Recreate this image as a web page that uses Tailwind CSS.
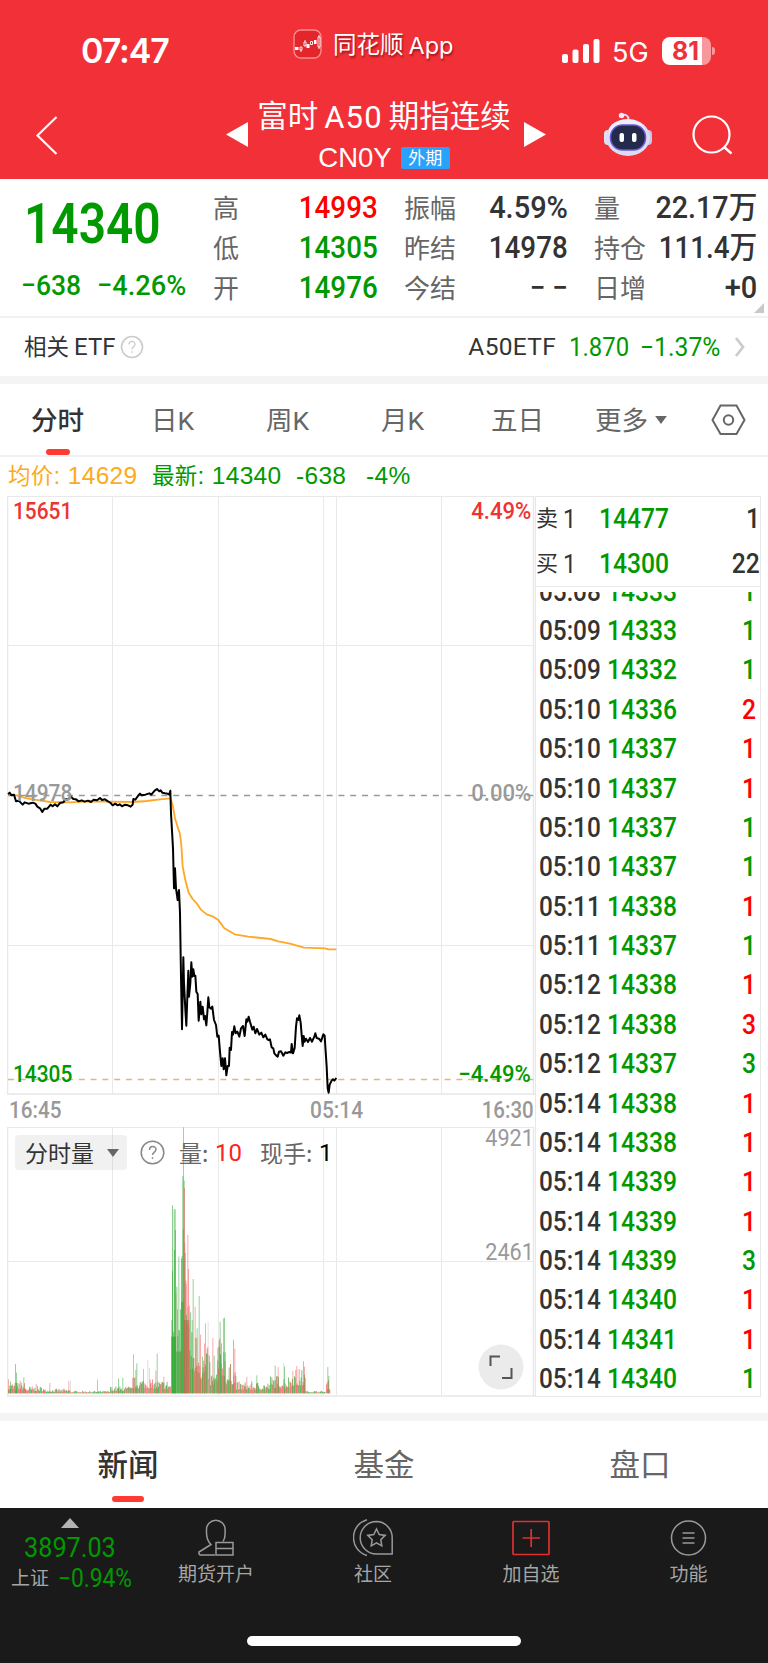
<!DOCTYPE html>
<html lang="zh-CN">
<head>
  <meta charset="UTF-8">
  <meta name="viewport" content="width=device-width, initial-scale=1.0">
  <title>富时A50期指连续</title>
  <script src="https://cdn.jsdelivr.net/npm/@tailwindcss/browser@4"></script>
</head>
<body class="w-[768px] h-[1663px] overflow-hidden bg-white text-[#333] font-['Liberation_Sans','Noto_Sans_CJK_SC',sans-serif] leading-none whitespace-nowrap flex flex-col">

  <!-- 顶部 -->
  <header class="h-[179px] shrink-0 bg-[#f23037] text-white">
    <div class="h-[92px] flex">
      <div class="w-[292px] pl-[81px] pt-[34px] text-[34px] font-semibold font-['Inter',sans-serif] tracking-[-1.1px]">07:47</div>
      <div class="w-[268px] pt-[29px] flex items-start gap-[10px]">
        <svg class="w-[31px] h-[31px]" viewBox="0 0 31 31" fill="none">
          <rect x="2" y="1" width="27" height="28" rx="7" fill="#e2262b" stroke="#fa8c8e" stroke-width="1.4"/>
          <path d="M3 18h3.500v3H3zM14.500 15h3v4h-3zM22 11h2.500v4H22z" fill="#fff"/>
          <path d="M8 18h2v3H8zM9 21v2M12 13h2v4h-2zM13 11v2M18.500 12.500h2v3h-2zM26 8h2v10h-2zM27 6v2M27 18v2" stroke="#fff" stroke-width=".9"/>
        </svg>
        <div class="pt-[5px] flex text-[23.500px] [text-shadow:1px_2px_2px_rgba(90,0,0,.55)]">同花顺<span class="ml-[5px] text-[23.500px] font-['Inter',sans-serif]">App</span></div>
      </div>
      <div class="flex items-start pt-[36px]">
        <svg class="w-[40px] h-[28px]" viewBox="0 0 40 28" fill="#fff">
          <rect x="2" y="18" width="6" height="9" rx="2"/><rect x="12.500" y="13.500" width="6" height="13.500" rx="2"/><rect x="23" y="8" width="6" height="19" rx="2"/><rect x="33.500" y="3" width="6" height="24" rx="2"/>
        </svg>
        <div class="pl-[12px] pt-[3px] w-[62px] text-[27px] font-['Inter',sans-serif]">5G</div>
        <div class="mt-[1px] w-[49px] h-[28px] rounded-[8px] bg-linear-to-r from-white from-[82%] to-white/50 to-[82%] flex items-center pl-[10px] text-[25px] font-bold font-['Inter',sans-serif] text-[#f23037]">81</div>
        <div class="mt-[11px] ml-[1px] w-[3px] h-[8px] rounded-r-full bg-white/50"></div>
      </div>
    </div>
    <div class="h-[87px] flex">
      <svg class="w-[225px] h-[87px]" viewBox="0 92 225 87" fill="none" stroke="#fff" stroke-width="2.200"><path d="M56.500 117 37.500 135.500 56.500 154"/></svg>
      <svg class="w-[24px] h-[87px]" viewBox="225 92 24 87" fill="#fff"><path d="M226 134.500 248 122v25z"/></svg>
      <div class="w-[270px] mr-[4px] flex flex-col items-center">
        <div class="mt-[9px] h-[32px] flex items-center gap-[6px] text-[30.500px] font-['Roboto','Noto_Sans_CJK_SC',sans-serif]"><span>富时</span><span class="tracking-[1.200px] text-[31px]">A50</span><span>期指连续</span></div>
        <div class="mt-[11px] h-[28px] flex items-center gap-[9px]">
          <span class="text-[27.500px]">CN0Y</span>
          <span class="w-[49px] h-[22px] rounded-[2px] bg-[#2aa2fc] text-[17px] flex items-center justify-center">外期</span>
        </div>
      </div>
      <svg class="w-[245px] h-[87px]" viewBox="523 92 245 87" fill="none">
        <path d="M524 122v25l22-12.500z" fill="#fff"/>
        <!-- 机器人 -->
        <path d="M622 115.500c3-2 6.500 0 6.500 4" stroke="#dcd8f5" stroke-width="2"/>
        <circle cx="621.500" cy="115.500" r="2.700" fill="#eef"/>
        <rect x="604" y="130" width="8" height="15" rx="4" fill="#dfe0f4"/><rect x="644" y="130" width="8" height="15" rx="4" fill="#c9c6e8"/>
        <ellipse cx="628" cy="137.500" rx="22" ry="18.500" fill="#dedcf3"/>
        <ellipse cx="627" cy="131" rx="18" ry="11.500" fill="#eeeefb"/>
        <rect x="610.500" y="125" width="35" height="25" rx="12" fill="#242a49" stroke="#6a55d8" stroke-width="1.500"/>
        <rect x="619.500" y="133" width="4.500" height="9" rx="2" fill="#fff"/><rect x="632" y="133" width="4.500" height="9" rx="2" fill="#fff"/>
        <circle cx="711.500" cy="134.500" r="18" stroke="#fff" stroke-width="2.200"/><path d="m724 147 7.500 6.500" stroke="#fff" stroke-width="2.400"/>
      </svg>
    </div>
  </header>

  <!-- 行情 -->
  <section class="h-[139px] shrink-0 pt-[9px] border-b-2 border-[#f1f1f1] flex relative">
    <div class="w-[213px] text-[#090] font-['Roboto',sans-serif]">
      <div class="pl-[24px] h-[76px] pt-[9px] text-[55px] font-semibold"><span class="inline-block origin-left scale-x-[.87]">14340</span></div>
      <div class="pl-[21px] flex text-[28.500px] font-medium h-[30px] mt-[8px]"><span class="w-[76px]"><span class="inline-block origin-left scale-x-[.93]">−638</span></span><span class="inline-block origin-left scale-x-[.955]">−4.26%</span></div>
    </div>
    <div id="quote" class="w-[544px] h-[120px] grid grid-cols-[165px_26px_164px_26px_163px] grid-rows-3 text-[26px] text-[#666]"></div>
    <svg class="absolute right-[4px] bottom-[3px] w-[10px] h-[10px]" viewBox="0 0 10 10"><path d="M10 0v10H0z" fill="#c8c8c8"/></svg>
  </section>

  <!-- 相关ETF -->
  <section class="h-[66px] shrink-0 border-b-8 border-[#f4f4f4] flex items-center pl-[24px] pr-[22px]">
    <span class="pt-[2px] text-[22.500px]">相关</span>
    <span class="ml-[5px] text-[24px] font-['Roboto',sans-serif]">ETF</span>
    <svg class="ml-[5px] w-[24px] h-[24px]" viewBox="0 0 24 24" fill="none" stroke="#ccc"><circle cx="12" cy="12" r="10.500" stroke-width="1.600"/><path d="M9 9.500C9 5.500 15 5.500 15 9.300c0 2.400-3 2.500-3 5.200" stroke-width="1.300"/><circle cx="12" cy="17" r=".5"/></svg>
    <span class="ml-auto text-[24.500px] font-['Roboto',sans-serif] tracking-[.3px]">A50ETF</span>
    <span class="ml-[13px] text-[26px] text-[#090] font-['Roboto',sans-serif] w-[71px]"><span class="inline-block origin-left scale-x-[.92]">1.870</span></span>
    <span class="text-[26px] text-[#090] font-['Roboto',sans-serif] w-[81px]"><span class="inline-block origin-left scale-x-[.95]">−1.37%</span></span>
    <svg class="ml-[13px] w-[12px] h-[20px]" viewBox="0 0 12 20" fill="none" stroke="#ccc" stroke-width="2.800"><path d="m2 1 7 9-7 9"/></svg>
  </section>

  <!-- 周期 -->
  <nav class="h-[73px] shrink-0 border-b-2 border-[#f1f1f1] flex text-[26.500px] text-[#666] font-['Roboto','Noto_Sans_CJK_SC',sans-serif]">
    <div class="w-[115px] flex flex-col items-center text-[#333] font-medium"><span class="h-[68px] pt-[24px]">分时</span><span class="-mt-[3px] w-[24px] h-[6px] shrink-0 rounded-full bg-[#ff3a30]"></span></div>
    <div class="w-[115px] text-center pt-[24px]">日K</div>
    <div class="w-[115px] text-center pt-[24px]">周K</div>
    <div class="w-[115px] text-center pt-[24px]">月K</div>
    <div class="w-[115px] text-center pt-[24px]">五日</div>
    <div class="w-[115px] pt-[24px] pl-[20px] flex gap-[7px]">更多<svg class="mt-[8px] w-[12px] h-[9px]" viewBox="0 0 13 10" fill="#666"><path d="M0 0h13L6.500 9z"/></svg></div>
    <svg class="mt-[20px] ml-[21px] w-[35px] h-[32px]" viewBox="0 0 35 32" fill="none" stroke="#666" stroke-width="2"><path d="M9.500 1.500h16L33.500 16l-8 14h-16l-8-14z"/><circle cx="17.500" cy="16" r="4.700"/></svg>
  </nav>

  <div class="h-[39px] shrink-0 flex items-center pl-[8px] text-[24.500px] text-[#090]">
    <span class="w-[144px] text-[#fcab1a] tracking-[.3px]"><span class="text-[22.500px]">均价</span>: 14629</span>
    <span class="w-[144px] tracking-[.3px]"><span class="text-[22.500px]">最新</span>: 14340</span>
    <span class="w-[70px] tracking-[.3px]">-638</span>
    <span class="tracking-[.3px]">-4%</span>
  </div>

  <!-- 图表和逐笔 -->
  <main class="h-[917px] shrink-0 flex pl-[7px]">
    <div class="w-[528px] font-['Roboto',sans-serif]">
      <div class="relative h-[599px]">
        <svg class="w-[528px] h-[599px]" viewBox="7 496 528 599" fill="none">
          <path d="M7 496.500h527M8 645.500h526M8 945.500h526M112.500 496v598M218.500 496v598M323.500 496v598M336.500 496v598M441.500 496v598" stroke="#e9e9e9"/>
          <path d="M7.500 496v598M533.500 496v598" stroke="#e8e8e8" stroke-width="1.500"/>
          <path d="M7 1094h528" stroke="#e6e6e6" stroke-width="1.500"/>
          <path d="M8 795.500h526" stroke="#999" stroke-width="1.300" stroke-dasharray="6 5.800"/>
          <path d="M8 1079.500h526" stroke="#d9b88c" stroke-width="1.300" stroke-dasharray="6 5.800"/>
          <g transform="translate(0 770) scale(.33333)" stroke-linejoin="round">
            <path stroke="#ffa827" stroke-width="5.500" d="M24 72 50 76 80 85 150 96 210 97 270 94 330 95 400 96 440 93 480 88 511 85 518 105 525 145 534 175 540 192 544 225 548 290 556 330 566 368 578 387 590 400 602 418 620 433 640 440 654 449 673 475 704 493 745 500 812 507 835 514 870 521 912 533 975 535 986 538 1009 538"/>
            <path stroke="#000" stroke-width="6" d="M24 72 29 68 34 76 42 74 48 94 56 92 62 98 68 104 74 97 85 101 98 98 106 101 112 110 120 115 127 126 133 116 142 116 152 104 158 109 165 103 172 109 180 99 190 97 196 88 206 87 212 79 220 87 228 88 236 94 245 91 254 95 264 92 273 96 281 89 291 91 300 84 306 90 315 88 324 94 332 99 338 106 346 101 353 106 359 103 366 109 375 104 384 106 392 110 398 104 400 87 406 89 416 75 420 71 425 76 436 74 448 70 454 74 464 62 471 57 478 64 482 61 487 68 495 70 503 71 508 74 511 62 513 130 517 200 519 235 522 355 525 295 528 355 533 390 537 360 540 430 543 620 546 778 550 562 552 640 556 718 559 767 562 680 565 602 567 680 571 640 574 577 577 620 580 598 583 618 586 617 589 665 593 672 596 752 601 695 604 733 608 710 612 748 615 738 619 766 622 728 625 682 628 712 633 716 637 710 642 750 648 765 652 800 656 797 660 845 664 888 668 865 671 898 675 865 679 916 683 888 687 888 689 833 693 840 696 786 699 794 703 769 707 790 712 785 718 800 723 775 729 768 734 798 739 748 742 755 746 740 750 755 757 779 761 770 766 790 771 777 778 794 784 788 790 802 796 794 802 808 806 810 810 808 815 832 820 835 823 850 829 857 833 860 837 845 843 844 850 857 856 847 861 849 868 846 873 848 875 822 879 850 884 834 888 770 891 745 895 750 898 736 902 758 905 795 908 828 911 798 914 815 918 806 924 816 930 804 936 815 943 800 946 790 950 804 957 806 963 814 970 793 974 797 977 845 980 890 983 955 986 968 989 944 995 932 999 928 1003 932 1009 924"/>
          </g>
        </svg>
        <span class="absolute left-[6px] top-[3px] text-[24px] font-medium text-[#e33]"><span class="inline-block origin-left scale-x-[.87]">15651</span></span>
        <span class="absolute left-[6px] top-[285px] text-[24px] font-medium text-[#999]"><span class="inline-block origin-left scale-x-[.87]">14978</span></span>
        <span class="absolute left-[6px] top-[566px] text-[24px] font-medium text-[#090]"><span class="inline-block origin-left scale-x-[.87]">14305</span></span>
        <span class="absolute right-[4px] top-[3px] text-[24px] font-medium text-[#e33]"><span class="inline-block origin-right scale-x-[.92]">4.49%</span></span>
        <span class="absolute right-[4px] top-[285px] text-[24px] font-medium text-[#999]"><span class="inline-block origin-right scale-x-[.92]">0.00%</span></span>
        <span class="absolute right-[4px] top-[566px] text-[24px] font-medium text-[#090]"><span class="inline-block origin-right scale-x-[.92]">−4.49%</span></span>
      </div>
      <div class="h-[32px] pt-[4px] flex text-[23.500px] font-medium text-[#999]">
        <span class="w-[303px] pl-[2px]"><span class="inline-block origin-left scale-x-[.88]">16:45</span></span>
        <span><span class="inline-block origin-left scale-x-[.89]">05:14</span></span>
        <span class="ml-auto pr-[1px]"><span class="inline-block origin-right scale-x-[.87]">16:30</span></span>
      </div>
      <div class="relative h-[270px]">
        <svg class="w-[528px] h-[270px]" viewBox="7 1127 528 270">
          <path d="M7 1127.500h527M8 1261.500h526M112.500 1127v269M218.500 1127v269M323.500 1127v269M336.500 1127v269M441.500 1127v269" stroke="#e9e9e9"/>
          <path d="M7.500 1127v269M533.500 1127v269M7 1396h528" stroke="#e8e8e8" stroke-width="1.500"/>
          <g id="bars" transform="translate(0 1060) scale(.33333)"></g>
        </svg>
        <div class="absolute left-[8px] top-[8px] h-[35px] flex items-center font-['Noto_Sans_CJK_SC',sans-serif] text-[23px] text-[#666]">
          <span class="w-[112px] h-[35px] rounded-[4px] bg-[#999]/14 flex items-center pl-[10px] gap-[13px] text-[#333]">分时量<svg class="w-[12px] h-[8px]" viewBox="0 0 12 8" fill="#666"><path d="M0 0h12L6 8z"/></svg></span>
          <svg class="ml-[13px] w-[25px] h-[25px]" viewBox="0 0 25 25" fill="none" stroke="#888"><circle cx="12.500" cy="12.500" r="11.300" stroke-width="1.500"/><path d="M9.500 10c0-4.500 6.500-4.500 6.500-.5 0 2.500-3.500 2.700-3.500 5.500" stroke-width="1.500"/><circle cx="12.500" cy="18" r=".6"/></svg>
          <span class="ml-[14px] w-[36px]">量:</span>
          <span class="w-[45px] text-[#ff2222] font-['Roboto',sans-serif] text-[24px]">10</span>
          <span class="w-[59px]">现手:</span>
          <span class="text-black font-['Roboto',sans-serif] text-[24px]">1</span>
        </div>
        <span class="absolute right-[1px] top-[0px] text-[23.500px] text-[#999]"><span class="inline-block origin-right scale-x-[.92]">4921</span></span>
        <span class="absolute right-[1px] top-[114px] text-[23.500px] text-[#999]"><span class="inline-block origin-right scale-x-[.92]">2461</span></span>
        <svg class="absolute left-[471px] top-[217px] w-[46px] h-[46px]" viewBox="0 0 46 46" fill="none"><circle cx="23" cy="23" r="22.500" fill="#ebebeb"/><path d="M12.500 22V12.500H22M24 34h9.500v-10" stroke="#555" stroke-width="2"/></svg>
      </div>
    </div>
    <div class="w-[226px] h-[901px] border-x-[1.500px] border-y border-[#e8e8e8] font-['Roboto','Noto_Sans_CJK_SC',sans-serif] font-medium">
      <div class="h-[90px] border-b border-[#e8e8e8] text-[28px]">
        <div class="h-[44px] flex items-center"><span class="w-[27px] text-[22px] font-normal">卖</span><span class="w-[36px] text-[26px] font-normal"><span class="inline-block origin-left scale-x-[.9]">1</span></span><span class="text-[#090]"><span class="inline-block origin-left scale-x-[.88]">14477</span></span><span class="ml-auto inline-block origin-right scale-x-[.88]">1</span></div>
        <div class="h-[45px] flex items-center"><span class="w-[27px] text-[22px] font-normal">买</span><span class="w-[36px] text-[26px] font-normal"><span class="inline-block origin-left scale-x-[.9]">1</span></span><span class="text-[#090]"><span class="inline-block origin-left scale-x-[.88]">14300</span></span><span class="ml-auto inline-block origin-right scale-x-[.88]">22</span></div>
      </div>
      <div class="mt-[5px] h-[804px] overflow-hidden"><div id="ticks" class="-mt-[20px] text-[28px]"></div></div>
    </div>
  </main>

  <!-- 资讯 -->
  <nav class="h-[95px] shrink-0 border-t-8 border-[#f4f4f4] grid grid-cols-3 text-[30.500px] text-[#666] text-center">
    <div class="flex flex-col items-center text-[#333] font-medium"><span class="pt-[29px] h-[75px]">新闻</span><span class="w-[32px] h-[6px] shrink-0 rounded-full bg-[#ff3a30]"></span></div>
    <div class="pt-[29px]">基金</div>
    <div class="pt-[29px]">盘口</div>
  </nav>

  <!-- 底部 -->
  <footer class="h-[155px] shrink-0 bg-[#1a1a1a] text-[#a6a6a6] text-[19px]">
    <div class="h-[128px] flex">
      <div class="w-[139px] flex flex-col items-center pt-[10px]">
        <svg class="w-[18px] h-[10px]" viewBox="0 0 18 10" fill="#b3b3b3"><path d="M9 0l9 10H0z"/></svg>
        <div class="mt-[6px] h-[28px] text-[28px] text-[#090] font-['Roboto',sans-serif]"><span class="inline-block scale-x-[.9]">3897.03</span></div>
        <div class="mt-[4px] pl-[11px] w-[139px] flex items-center"><span class="w-[52px]">上证</span><span class="text-[25px] text-[#090] font-['Roboto',sans-serif]"><span class="inline-block origin-left scale-x-[.91]">−0.94%</span></span></div>
      </div>
      <div class="w-[154px] flex flex-col items-center pt-[11px] gap-[9px]">
        <svg class="w-[36px] h-[37px]" viewBox="0 0 36 37" fill="none" stroke="#999" stroke-width="1.500"><path d="M17 36H2.500Q1 36 1 34v-1l12-7.500Q8.500 21 8.500 14V10.500a9.300 9.300 0 0 1 18.600 0V15q0 4-2 7.500"/><path d="M18 23.500h17V36H18zM18 29.500h17"/></svg>
        <span>期货开户</span>
      </div>
      <div class="w-[160px] flex flex-col items-center pt-[11px] gap-[9px]">
        <svg class="w-[40px] h-[37px]" viewBox="0 0 40 37" fill="none" stroke="#999" stroke-width="1.500"><path d="M14 .8C-4 6-4 31 14 36.500"/><path d="M23.500 2.500a16.300 16.300 0 1 0 0 32.600H39.200V18.800A16 16 0 0 0 23.500 2.500z"/><path d="m23.500 10 2.700 5.600 6 .8-4.400 4.300 1 6.100-5.300-3-5.300 3 1-6.100-4.400-4.300 6-.8z"/></svg>
        <span>社区</span>
      </div>
      <div class="w-[156px] flex flex-col items-center pt-[11px] gap-[9px]">
        <svg class="w-[38px] h-[37px]" viewBox="0 0 38 37" fill="none" stroke="#e03030" stroke-width="1.700"><rect x="1" y="2.500" width="36" height="33" rx="1"/><path d="M10.500 19h17.500M19.200 10v18"/></svg>
        <span>加自选</span>
      </div>
      <div class="w-[159px] flex flex-col items-center pt-[11px] gap-[9px]">
        <svg class="w-[37px] h-[37px]" viewBox="0 0 37 37" fill="none" stroke="#999" stroke-width="1.500"><circle cx="18.500" cy="19" r="17"/><path d="M12.500 14h12M12.500 19h12M12.500 24h12"/></svg>
        <span>功能</span>
      </div>
    </div>
    <div class="mx-auto w-[274px] h-[10px] rounded-full bg-white"></div>
  </footer>

  <script>
    // 行情数据
    const quote = [
      ['高', '14993', 'text-[#f00]'], ['振幅', '4.59%', 'text-[#333] scale-x-[.95]'], ['量', '22.17万', 'text-[#333] scale-x-[.94]'],
      ['低', '14305', 'text-[#090]'], ['昨结', '14978', 'text-[#333]'], ['持仓', '111.4万', 'text-[#333]'],
      ['开', '14976', 'text-[#090]'], ['今结', '− −', 'text-[#333]'], ['日增', '+0', 'text-[#333] scale-x-[.95]']
    ];
    document.getElementById('quote').innerHTML = quote.map(([k, v, c], i) =>
      `<div class="flex items-center justify-between h-[40px]"><span class="pt-[2px]">${k}</span><span class="inline-block origin-right ${c.includes('scale') ? '' : 'scale-x-[.91]'} text-[30.500px] font-medium font-['Roboto','Noto_Sans_CJK_SC',sans-serif] ${c}">${v}</span></div>${i % 3 < 2 ? '<i></i>' : ''}`).join('');

    // 逐笔成交：时间、价格、手数、方向
    const ticks = [
      ['05:08', 14333, 1, 0], ['05:09', 14333, 1, 0], ['05:09', 14332, 1, 0], ['05:10', 14336, 2, 1], ['05:10', 14337, 1, 1],
      ['05:10', 14337, 1, 1], ['05:10', 14337, 1, 0], ['05:10', 14337, 1, 0], ['05:11', 14338, 1, 1], ['05:11', 14337, 1, 0],
      ['05:12', 14338, 1, 1], ['05:12', 14338, 3, 1], ['05:12', 14337, 3, 0], ['05:14', 14338, 1, 1], ['05:14', 14338, 1, 1],
      ['05:14', 14339, 1, 1], ['05:14', 14339, 1, 1], ['05:14', 14339, 3, 0], ['05:14', 14340, 1, 1], ['05:14', 14341, 1, 1], ['05:14', 14340, 1, 0]
    ];
    document.getElementById('ticks').innerHTML = ticks.map(([t, p, n, up]) =>
      `<div class="h-[39.380px] flex items-center pl-[3px] pr-[4px]"><span class="w-[68px]"><span class="inline-block origin-left scale-x-[.87]">${t}</span></span><span class="text-[#090]"><span class="inline-block origin-left scale-x-[.88]">${p}</span></span><span class="ml-auto inline-block origin-right scale-x-[.88] ${up ? 'text-[#f00]' : 'text-[#090]'}">${n}</span></div>`).join('');

    // 成交量柱
    const base = 1000;
    const G = '#2fa832', R = '#f55a5a';
    let html = '';
    const bar = (x, y, c, o, w = 3) => html += `<rect x="${x}" y="${y}" width="${w}" height="${base - y}" fill="${c}" fill-opacity="${o}"/>`;
    let seed = 7;
    const rnd = () => (seed = (seed * 16807) % 2147483647) / 2147483647;
    // 区间：起点、终点、最大高度
    const zones = [[24, 75, 35], [75, 130, 22], [130, 210, 14], [210, 330, 8], [330, 395, 22], [395, 450, 50], [450, 512, 42],
      [568, 600, 200], [600, 630, 140], [630, 652, 70], [652, 676, 170], [676, 708, 90], [708, 810, 36], [810, 870, 56], [870, 916, 76], [916, 976, 8], [978, 990, 40]];
    for (const [a, b, h] of zones) {
      for (let x = a; x < b; x += 2) {
        bar(x, base - h * (.3 + .7 * rnd() ** 2), rnd() > .48 ? G : R, .65);
      }
    }
    const peaks = [
      [24, 958, R], [30, 965, G], [45, 912, G], [48, 938, G], [59, 962, R], [70, 952, G], [107, 972, R], [148, 969, R], [205, 963, R], [210, 961, '#ccc'], [291, 959, R], [354, 956, G], [367, 953, G],
      [399, 883, R], [406, 930, G], [409, 910, G], [429, 927, R], [442, 900, '#bbb'], [447, 924, '#bbb'], [466, 932, R], [470, 881, G], [490, 950, R],
      [535, 590, G], [562, 525, R], [564, 627, R], [567, 737, R], [570, 757, G], [575, 780, G], [578, 657, G], [584, 740, R], [589, 835, R], [590, 805, G], [596, 708, G], [600, 824, R], [606, 890, G],
      [615, 790, R], [612, 850, R], [623, 785, '#ccc'], [620, 882, G], [637, 834, R], [641, 887, G], [652, 863, G], [656, 842, R], [659, 785, G], [663, 850, G], [669, 775, R], [672, 773, G], [675, 877, R],
      [690, 912, R], [699, 839, G], [703, 866, R], [739, 950, R], [769, 946, G], [824, 916, G], [833, 921, R], [850, 910, '#bbb'], [852, 920, G], [877, 933, R], [889, 918, R], [909, 904, G], [912, 920, R], [982, 921, G], [985, 948, G]
    ];
    for (const [x, y, c] of peaks) bar(x, y, c, .5);
    // 暴跌时段
    for (const [x, y, c] of [[514, 780, G], [516, 436, G], [516, 632, G], [519, 815, G], [521, 448, G], [524, 448, G], [522, 570, G], [525, 510, G], [526, 700, R], [529, 680, G], [531, 748, R], [532, 828, G], [535, 810, G], [537, 812, R], [540, 748, G], [540, 872, R], [543, 595, G], [545, 588, G], [547, 348, G], [549, 202, R], [548, 508, G], [551, 362, G], [552, 384, R], [553, 548, R], [554, 579, G], [556, 662, R], [557, 672, R], [558, 765, G], [560, 790, R], [562, 740, R], [565, 800, R]]) bar(x, y, c, .55);
    bar(514, 830, G, .75, 14);
    bar(528, 875, G, .5, 16);
    bar(543, 725, G, .6, 8);
    bar(552, 780, '#b06040', .5, 16);
    document.getElementById('bars').innerHTML = html;
  </script>
</body>
</html>
